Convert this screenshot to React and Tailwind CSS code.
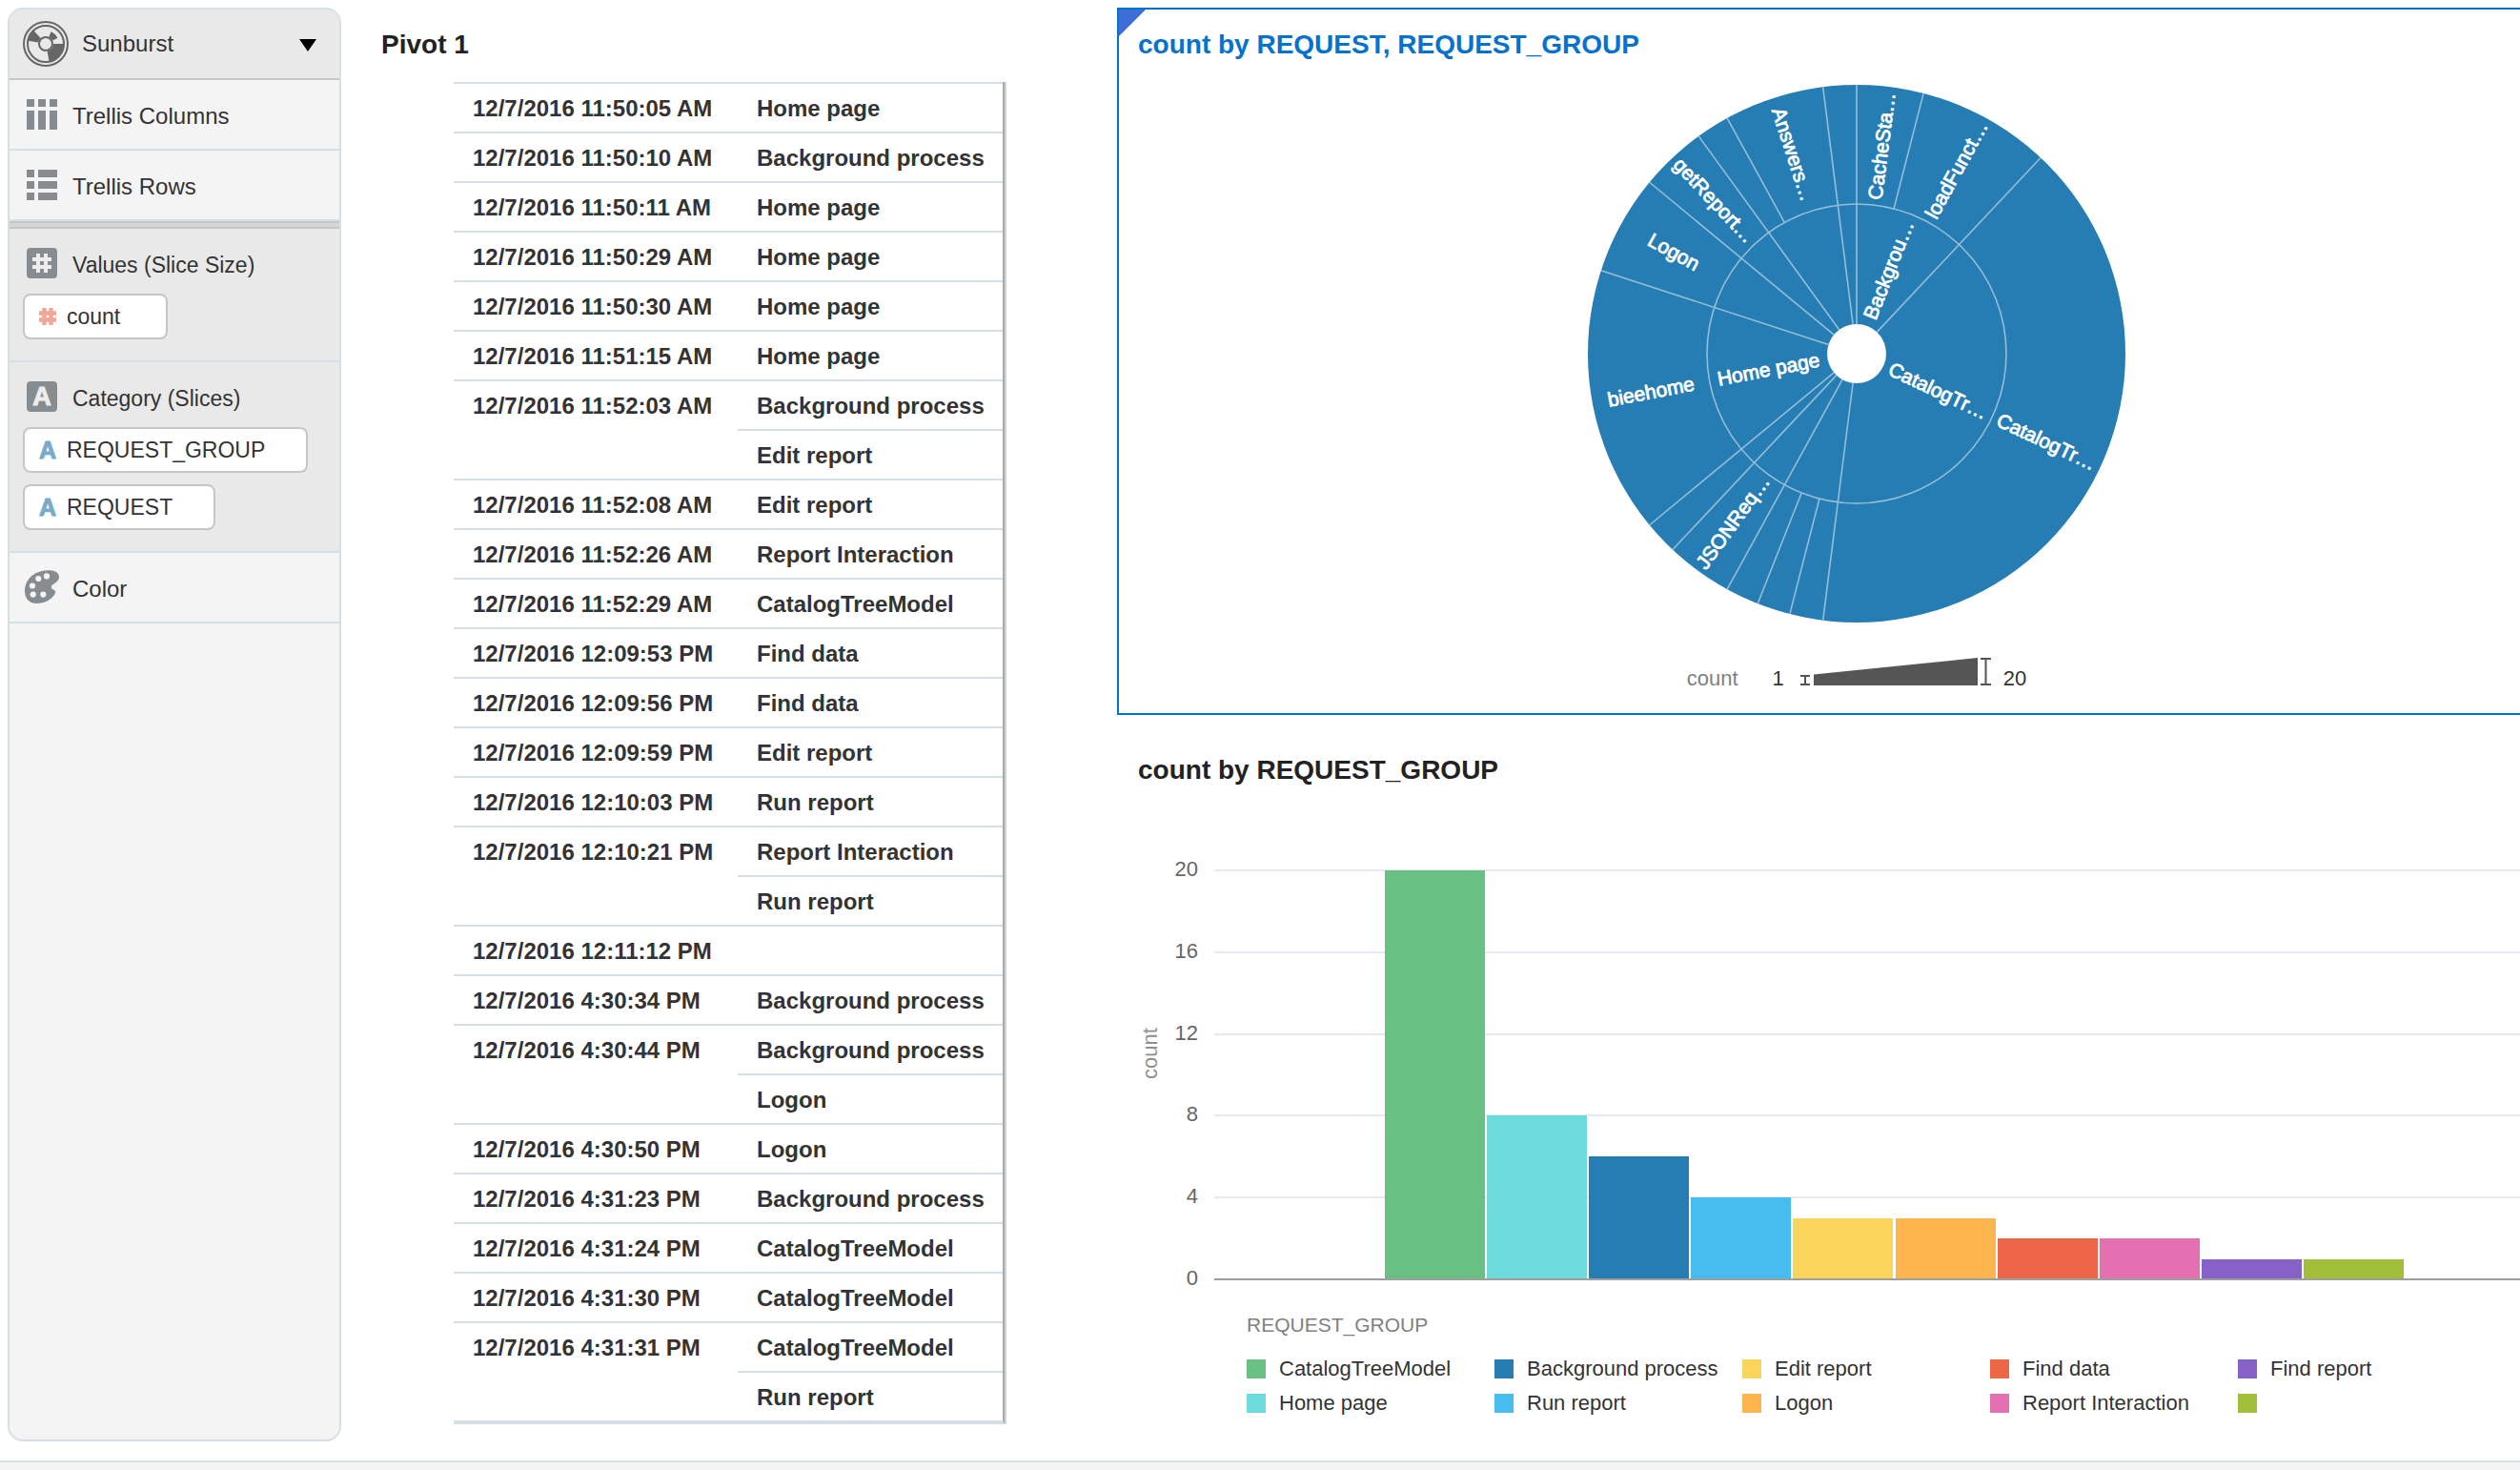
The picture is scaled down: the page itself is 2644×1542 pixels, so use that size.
import React from "react";

function polar(angle, radius) {
  const a = ((angle - 90) * Math.PI) / 180;
  return [Math.cos(a) * radius, Math.sin(a) * radius];
}

function wedge(cx, cy, from, to, inner, outer) {
  const [x1, y1] = polar(from, outer);
  const [x2, y2] = polar(to, outer);
  const [x3, y3] = polar(to, inner);
  const [x4, y4] = polar(from, inner);
  return `M${cx + x1} ${cy + y1}A${outer} ${outer} 0 0 1 ${cx + x2} ${cy + y2}L${cx + x3} ${cy + y3}A${inner} ${inner} 0 0 0 ${cx + x4} ${cy + y4}Z`;
}

function SunburstIcon() {
  return (
    <svg width="48" height="48" viewBox="0 0 48 48" fill="none" stroke="#666666" aria-hidden="true">
      <circle cx="24" cy="24" r="23" strokeWidth="2" />
      <circle cx="24" cy="24" r="19" strokeWidth="2" />
      <circle cx="24" cy="24" r="7" strokeWidth="2" />
      <g fill="#666666" stroke="none">
        <path d={wedge(24, 24, 280, 318, 8, 19)} />
        <path d={wedge(24, 24, 24, 64, 8, 14)} />
        <path d={wedge(24, 24, 90, 169, 8, 19)} />
      </g>
    </svg>
  );
}

function ColumnsIcon() {
  return (
    <svg width="32" height="32" viewBox="0 0 32 32" fill="#878c90" aria-hidden="true">
      {[0, 12, 24].map((x) => (
        <g key={x}>
          <rect x={x} y="0" width="8" height="8" />
          <rect x={x} y="12" width="8" height="20" />
        </g>
      ))}
    </svg>
  );
}

function RowsIcon() {
  return (
    <svg width="32" height="32" viewBox="0 0 32 32" fill="#878c90" aria-hidden="true">
      {[0, 12, 24].map((y) => (
        <g key={y}>
          <rect x="0" y={y} width="8" height="8" />
          <rect x="12" y={y} width="20" height="8" />
        </g>
      ))}
    </svg>
  );
}

function HashTile() {
  return (
    <svg width="32" height="32" viewBox="0 0 32 32" aria-hidden="true">
      <rect width="32" height="32" rx="4" fill="#878c90" />
      <path d="M12 6v20M20 6v20M6 12h20M6 20h20" stroke="#ededed" strokeWidth="4" />
    </svg>
  );
}

function LetterTile() {
  return (
    <svg width="32" height="32" viewBox="0 0 32 32" aria-hidden="true">
      <rect width="32" height="32" rx="4" fill="#878c90" />
      <text x="16" y="25" textAnchor="middle" fontSize="27" fontWeight="700" fill="#ededed" stroke="#ededed" strokeWidth="1">
        A
      </text>
    </svg>
  );
}

function PaletteIcon() {
  return (
    <svg width="36" height="36" viewBox="0 0 36 36" aria-hidden="true">
      <path
        fill="#878c90"
        d="M24 0.3C31 0 36 2.6 36 7C36 11 32 13.5 29 15.5C27 17.5 27.5 19.5 30 20.5C32.6 21.5 32.8 23.5 31 26C27.5 31 21 35 12.5 35C4 35 0 29.5 0 22C0 9 11 0.6 24 0.3Z"
      />
      <g fill="#f4f4f4">
        <circle cx="23" cy="6.4" r="3.1" />
        <circle cx="14.3" cy="9" r="3.1" />
        <circle cx="8" cy="16.5" r="3.1" />
        <circle cx="8.7" cy="25.6" r="3.1" />
        <circle cx="19.3" cy="25.6" r="3.1" />
      </g>
    </svg>
  );
}

function ChipIcon({ kind }) {
  if (kind === "number") {
    return (
      <svg width="20" height="20" viewBox="0 0 20 20" aria-hidden="true">
        <path d="M6.500 1v18M13.500 1v18M1 6.500h18M1 13.500h18" stroke="#f3a596" strokeWidth="4.4" />
      </svg>
    );
  }
  return (
    <svg width="20" height="30" viewBox="0 -5 20 30" aria-hidden="true">
      <text x="10" y="19" textAnchor="middle" fontSize="25" fontWeight="700" fill="#78aacb" stroke="#78aacb" strokeWidth="1">
        A
      </text>
    </svg>
  );
}

function Chip({ kind, label }) {
  return (
    <button className="flex h-12 min-w-[152px] items-center gap-2.5 rounded-lg border-2 border-[#c6c6c6] bg-white pl-3.5 pr-[43px] text-[23px] leading-8">
      <ChipIcon kind={kind} />
      {label}
    </button>
  );
}

function Row({ icon, label }) {
  return (
    <div className="flex h-[74px] items-center gap-4 border-b-2 border-[#d5dfe6] pl-[18px] text-2xl">
      {icon}
      <span className="pt-1">{label}</span>
    </div>
  );
}

function DropGroup({ icon, label, children }) {
  return (
    <section className="border-b-2 border-[#d5dfe6] bg-[#e9e9e9] pb-[22px] pl-3.5 pt-5">
      <h3 className="flex h-8 items-center gap-4 pl-1 text-[23px] leading-8">
        {icon}
        <span className="pt-1">{label}</span>
      </h3>
      <div className="mt-4 flex flex-col items-start gap-3">{children}</div>
    </section>
  );
}

function Sidebar() {
  return (
    <aside className="w-[350px] shrink-0 overflow-hidden rounded-2xl border-2 border-[#d5dfe6] bg-[#f4f4f4] text-[#333333]">
      <button className="flex h-[74px] w-full items-center border-b-2 border-[#c6c6c6] bg-[#e9e9e9] pl-3.5 pr-6 text-2xl">
        <SunburstIcon />
        <span className="ml-3.5">Sunburst</span>
        <svg className="ml-auto mt-0.5" width="18" height="13" viewBox="0 0 18 13" aria-hidden="true">
          <path d="M0 0h18L9 13z" />
        </svg>
      </button>
      <Row icon={<ColumnsIcon />} label="Trellis Columns" />
      <Row icon={<RowsIcon />} label="Trellis Rows" />
      <div className="h-2 border-y-2 border-[#c6c6c6] bg-[#d6d6d6]" />
      <DropGroup icon={<HashTile />} label="Values (Slice Size)">
        <Chip kind="number" label="count" />
      </DropGroup>
      <DropGroup icon={<LetterTile />} label="Category (Slices)">
        <Chip kind="text" label="REQUEST_GROUP" />
        <Chip kind="text" label="REQUEST" />
      </DropGroup>
      <div className="flex h-[74px] items-center gap-3.5 border-b-2 border-[#d5dfe6] pl-4 text-2xl">
        <PaletteIcon />
        <span className="pt-1">Color</span>
      </div>
    </aside>
  );
}

const PIVOT = [
  ["12/7/2016 11:50:05 AM", ["Home page"]],
  ["12/7/2016 11:50:10 AM", ["Background process"]],
  ["12/7/2016 11:50:11 AM", ["Home page"]],
  ["12/7/2016 11:50:29 AM", ["Home page"]],
  ["12/7/2016 11:50:30 AM", ["Home page"]],
  ["12/7/2016 11:51:15 AM", ["Home page"]],
  ["12/7/2016 11:52:03 AM", ["Background process", "Edit report"]],
  ["12/7/2016 11:52:08 AM", ["Edit report"]],
  ["12/7/2016 11:52:26 AM", ["Report Interaction"]],
  ["12/7/2016 11:52:29 AM", ["CatalogTreeModel"]],
  ["12/7/2016 12:09:53 PM", ["Find data"]],
  ["12/7/2016 12:09:56 PM", ["Find data"]],
  ["12/7/2016 12:09:59 PM", ["Edit report"]],
  ["12/7/2016 12:10:03 PM", ["Run report"]],
  ["12/7/2016 12:10:21 PM", ["Report Interaction", "Run report"]],
  ["12/7/2016 12:11:12 PM", [""]],
  ["12/7/2016 4:30:34 PM", ["Background process"]],
  ["12/7/2016 4:30:44 PM", ["Background process", "Logon"]],
  ["12/7/2016 4:30:50 PM", ["Logon"]],
  ["12/7/2016 4:31:23 PM", ["Background process"]],
  ["12/7/2016 4:31:24 PM", ["CatalogTreeModel"]],
  ["12/7/2016 4:31:30 PM", ["CatalogTreeModel"]],
  ["12/7/2016 4:31:31 PM", ["CatalogTreeModel", "Run report"]],
];

function Pivot() {
  return (
    <section className="w-[814px] shrink-0 pl-[42px]">
      <h2 className="pt-[23px] text-[28px] font-bold leading-8 text-[#222222]">Pivot 1</h2>
      <div className="ml-[76px] mt-[23px] w-[580px] border-r-2 border-[#d3d3d3]">
        <table className="w-full table-fixed border-separate border-spacing-0 border-b-4 border-r-2 border-b-[#d5dfe6] border-r-[#a9a9a9] text-2xl font-bold text-[#333333]">
          <colgroup>
            <col className="w-[298px]" />
            <col />
          </colgroup>
          <tbody>
            {PIVOT.map(([time, groups]) =>
              groups.map((group, i) => (
                <tr key={time + i} className="h-[52px]">
                  {i === 0 && (
                    <th
                      rowSpan={groups.length}
                      scope="rowgroup"
                      className="whitespace-nowrap border-t-2 border-[#d5dfe6] pb-2 pl-5 pt-2.5 text-left align-top font-bold"
                    >
                      {time}
                    </th>
                  )}
                  <td className="whitespace-nowrap border-t-2 border-[#d5dfe6] pb-2 pl-5 pt-2.5 align-top">{group}</td>
                </tr>
              ))
            )}
          </tbody>
        </table>
      </div>
    </section>
  );
}

const STEP = 7.2;
const HOLE = 31;
const MIDDLE = 157;
const RIM = 282;
const CENTER = 282;
const GROUP_EDGES = [0, 6, 26, 29, 31, 32, 40, 43, 45, 49];
const CHILD_EDGES = [2, 27, 28, 46];
const SLICE_LABELS = [
  ["Backgrou…", 3, 0],
  ["CatalogTr…", 16, 0],
  ["Home page", 36, 0],
  ["CacheSta…", 1, 1],
  ["loadFunct…", 4, 1],
  ["CatalogTr…", 16, 1],
  ["JSONReq…", 30, 1],
  ["bieehome", 36, 1],
  ["Logon", 41.5, 1],
  ["getReport…", 44, 1],
  ["Answers…", 47.5, 1],
];

function Spoke({ at, from }) {
  const [x1, y1] = polar(at * STEP, from);
  const [x2, y2] = polar(at * STEP, RIM);
  return <line x1={x1} y1={y1} x2={x2} y2={y2} />;
}

function Sunburst() {
  return (
    <svg width="564" height="564" viewBox="0 0 564 564" role="img" aria-label="count by REQUEST, REQUEST_GROUP">
      <g transform={`translate(${CENTER} ${CENTER})`}>
        <circle r={RIM} fill="#267db3" />
        <g stroke="#93bed9" strokeWidth="1.6" fill="none">
          <circle r={MIDDLE} />
          {GROUP_EDGES.map((at) => (
            <Spoke key={at} at={at} from={HOLE} />
          ))}
          {CHILD_EDGES.map((at) => (
            <Spoke key={at} at={at} from={MIDDLE} />
          ))}
        </g>
        <circle r={HOLE} fill="#ffffff" />
        <g fill="#ffffff" stroke="#ffffff" strokeWidth="0.8" fontSize="21" textAnchor="middle">
          {SLICE_LABELS.map(([label, at, ring]) => {
            const angle = at * STEP;
            const [x, y] = polar(angle, ring ? (MIDDLE + RIM) / 2 : (HOLE + MIDDLE) / 2);
            const turn = angle < 180 ? angle - 90 : angle - 270;
            return (
              <text key={label + ring} transform={`translate(${x} ${y}) rotate(${turn})`} y="6">
                {label}
              </text>
            );
          })}
        </g>
      </g>
    </svg>
  );
}

function SizeLegend() {
  return (
    <div className="flex items-end text-[22px] leading-6 text-[#333333]">
      <span className="text-[#808080]">count</span>
      <span className="ml-9">1</span>
      <svg className="mb-[5px] ml-4" width="202" height="30" viewBox="0 0 202 30" fill="none" stroke="#555555" strokeWidth="2" aria-hidden="true">
        <path d="M1 20h10M6 20v9M1 29h10" />
        <path d="M15 18.500L187 1v29H15z" fill="#555555" stroke="none" />
        <path d="M190 2h11M195.500 2v27M190 29h11" />
      </svg>
      <span className="ml-3">20</span>
    </div>
  );
}

const BARS = [
  ["CatalogTreeModel", 20, "#68c182"],
  ["Home page", 8, "#6ddbdb"],
  ["Background process", 6, "#267db3"],
  ["Run report", 4, "#47bdef"],
  ["Edit report", 3, "#fad55c"],
  ["Logon", 3, "#ffb54d"],
  ["Find data", 2, "#ed6647"],
  ["Report Interaction", 2, "#e371b2"],
  ["Find report", 1, "#8561c8"],
  ["", 1, "#a2bf39"],
];

const BASE = 442;
const yOf = (value) => Math.round(BASE - (value * 429) / 20);

function BarChart() {
  return (
    <svg className="block h-[474px] w-full" role="img" aria-label="count by REQUEST_GROUP">
      {[20, 16, 12, 8, 4].map((v) => (
        <rect key={v} x="102" y={yOf(v) - 1} width="100%" height="2" fill="#e6eaee" />
      ))}
      {BARS.map(([name, value, color], i) => (
        <rect key={name} x={Math.round(281 + i * 107.1)} y={yOf(value)} width="105" height={BASE - yOf(value)} fill={color} />
      ))}
      <rect x="102" y={BASE - 1} width="100%" height="2" fill="#9e9e9e" />
      <g fontSize="22" fill="#666666" textAnchor="end">
        {[20, 16, 12, 8, 4, 0].map((v) => (
          <text key={v} x="85" y={yOf(v) + 6}>
            {v}
          </text>
        ))}
      </g>
      <text transform="translate(42 205) rotate(-90)" textAnchor="middle" fontSize="22" fill="#8f8f8f">
        count
      </text>
    </svg>
  );
}

function BarLegend() {
  return (
    <div className="pl-[136px] text-[22px] leading-9 text-[#333333]">
      <h3 className="text-[21px] leading-8 text-[#808080]">REQUEST_GROUP</h3>
      <ul className="mt-3 grid grid-flow-col grid-cols-[repeat(5,260px)] grid-rows-2">
        {BARS.map(([name, , color]) => (
          <li key={name} className="flex h-9 items-center gap-3.5 whitespace-nowrap">
            <span className="size-5" style={{ backgroundColor: color }} />
            {name}
          </li>
        ))}
      </ul>
    </div>
  );
}

export default function App() {
  return (
    <div className="flex min-h-screen flex-col overflow-hidden bg-white font-['Liberation_Sans',Arial,sans-serif]">
      <main className="flex flex-1 pb-5 pl-2 pt-2">
        <Sidebar />
        <Pivot />
        <div className="min-w-0 flex-1">
          <section className="relative border-2 border-r-0 border-[#0572ce] pb-6">
            <svg className="absolute left-0 top-0" width="28" height="28" viewBox="0 0 28 28" aria-hidden="true">
              <path d="M0 0h28L0 28z" fill="#3d6ed8" />
            </svg>
            <h2 className="pl-5 pt-[21px] text-[28px] font-bold leading-8 text-[#0572ce]">count by REQUEST, REQUEST_GROUP</h2>
            <div className="mt-[26px] flex flex-col items-center gap-9 pl-[78px]">
              <Sunburst />
              <SizeLegend />
            </div>
          </section>
          <section className="pt-[42px]">
            <h2 className="pl-[22px] text-[28px] font-bold leading-8 text-[#222222]">count by REQUEST_GROUP</h2>
            <div className="mt-[76px]">
              <BarChart />
            </div>
            <BarLegend />
          </section>
        </div>
      </main>
      <footer className="h-2.5 border-t-2 border-[#d5dfe6] bg-[#f4f4f4]" />
    </div>
  );
}
